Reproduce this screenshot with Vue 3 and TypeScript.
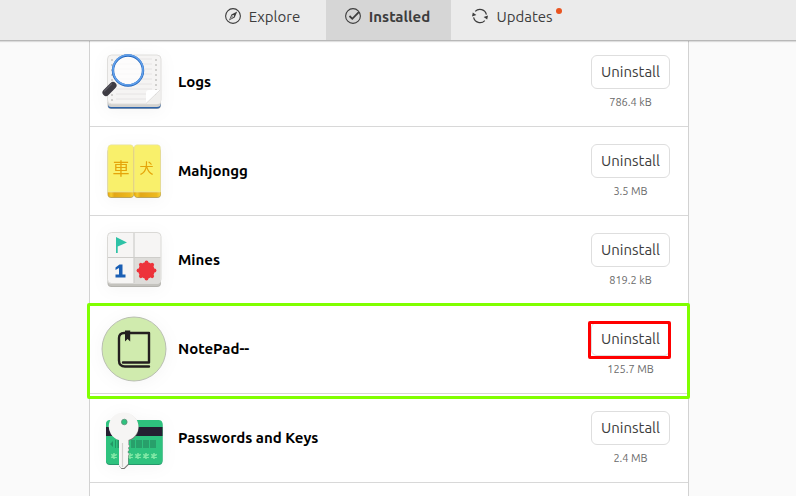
<script setup lang="ts">
import { ref } from 'vue'

type IconName = 'logs' | 'mahjongg' | 'mines' | 'notepad' | 'keys'

interface InstalledApp {
  name: string
  size: string
  icon: IconName
  highlighted?: boolean
}

const tabs = ['Explore', 'Installed', 'Updates'] as const
const activeTab = ref<(typeof tabs)[number]>('Installed')

const apps: InstalledApp[] = [
  { name: 'Logs', size: '786.4 kB', icon: 'logs' },
  { name: 'Mahjongg', size: '3.5 MB', icon: 'mahjongg' },
  { name: 'Mines', size: '819.2 kB', icon: 'mines' },
  { name: 'NotePad--', size: '125.7 MB', icon: 'notepad', highlighted: true },
  { name: 'Passwords and Keys', size: '2.4 MB', icon: 'keys' },
]

const bars = [30, 32, 35, 37, 39, 42, 44, 46, 49, 51, 53]
const stars = [12, 28, 36, 44, 52]
const ruled = [9, 14, 19, 24, 29, 34, 39, 44, 49]
const spikes = [0, 45, 90, 135, 180, 225, 270, 315]
</script>

<template>
  <div class="window">
    <header class="header">
      <nav class="tabs">
        <button
          v-for="tab in tabs"
          :key="tab"
          type="button"
          class="tab"
          :class="{ active: tab === activeTab }"
          @click="activeTab = tab"
        >
          <svg class="tab-icon" viewBox="0 0 16 16" aria-hidden="true">
            <template v-if="tab === 'Explore'">
              <circle cx="8" cy="8" r="7.4" fill="none" stroke="#3d3d3d" stroke-width="1.1" />
              <path fill="#3d3d3d" fill-rule="evenodd" d="M12.2 3.6 9.7 9.6 3.9 12.4 6.4 6.5ZM8.1 7A1 1 0 1 0 8.1 9 1 1 0 1 0 8.1 7Z" />
              <path d="M4.4 11.9 7 7.2 8.6 8.9Z" fill="#a5a5a5" />
            </template>
            <template v-else-if="tab === 'Installed'">
              <circle cx="8" cy="8" r="7.4" fill="none" stroke="#3d3d3d" stroke-width="1.1" />
              <path d="M4.5 8 7.3 10.8 13.8 4.2" fill="none" stroke="#3d3d3d" stroke-width="1.8" />
            </template>
            <template v-else>
              <path d="M3.2 3.4A6.6 6.6 0 0 1 14.4 6.6M12.8 12.6A6.6 6.6 0 0 1 1.6 9.4" fill="none" stroke="#3d3d3d" stroke-width="1.2" />
              <path d="M0 8.6 .8 4.4 4.4 7ZM16 7.4 15.2 11.6 11.6 9Z" fill="#3d3d3d" />
            </template>
          </svg>
          <span>{{ tab }}</span>
          <i v-if="tab === 'Updates'" class="dot"></i>
        </button>
      </nav>
    </header>

    <main class="content">
      <ul class="list">
        <li v-for="app in apps" :key="app.name" class="row" :class="{ highlighted: app.highlighted }">
          <svg class="app-icon" viewBox="0 0 64 64" aria-hidden="true">
            <template v-if="app.icon === 'logs'">
              <rect x="5.5" y="8" width="53.5" height="51" rx="4" fill="#bdbdbb" />
              <path d="M6 54H58.500V55.500Q58.500 58.500 55 58.500H9Q6 58.500 6 55.500Z" fill="#2c62a8" />
              <path d="M6 50H58.500V54Q58.500 57 55 57H9Q6 57 6 54Z" fill="#d3d2cf" />
              <rect x="5.500" y="5" width="53.500" height="49" rx="4" fill="#f5f4f3" stroke="#dfdedc" />
              <path v-for="y in ruled" :key="y" :d="`M14 ${y}H50`" stroke="#e2e1df" stroke-width=".8" />
              <path v-for="y in ruled" :key="'h' + y" :d="`M9 ${y + 1}h2M53 ${y + 1}h2`" stroke="#d0cfcd" stroke-width="2" />
              <path d="M58.500 40V51Q58.500 54 55 54H44Z" fill="#f0efed" />
              <path d="M44 53.500V43Q44 40 47 40H58Z" fill="#fff" />
              <path d="M44 53.500 58 40" stroke="#d4d3d1" stroke-width=".7" />
              <circle cx="26" cy="20.500" r="15" fill="#fff" fill-opacity=".75" />
              <path d="M4 42.500 11 35.500" stroke="#3d3b43" stroke-width="7" stroke-linecap="round" />
              <path d="M2.500 41 9.500 34" stroke="#5a5861" stroke-width="1.200" stroke-linecap="round" />
              <circle cx="26" cy="20.500" r="15" fill="none" stroke="#1f64bd" stroke-width="2.400" />
              <circle cx="26" cy="20" r="15" fill="none" stroke="#62a0ea" stroke-width="1.600" />
            </template>

            <template v-else-if="app.icon === 'mahjongg'">
              <defs>
                <linearGradient id="tile-front">
                  <stop offset="0" stop-color="#e5a50a" />
                  <stop offset=".12" stop-color="#f4c92b" />
                  <stop offset=".25" stop-color="#e3a716" />
                  <stop offset=".85" stop-color="#edb91e" />
                  <stop offset="1" stop-color="#f7d33a" />
                </linearGradient>
              </defs>
              <rect x="5.500" y="9" width="26.500" height="50" rx="4" fill="#bba55b" />
              <rect x="32" y="9" width="27" height="50" rx="4" fill="#bba55b" />
              <rect x="6" y="9" width="25.500" height="49" rx="3.500" fill="url(#tile-front)" />
              <rect x="32" y="9" width="26.500" height="49" rx="3.500" fill="url(#tile-front)" />
              <path d="M9 5.800H28.500Q31.500 6 31.500 9V53H5.800V9Q6 6 9 5.800Z" fill="#f9f06b" stroke="#e2dfbd" stroke-width=".6" />
              <path d="M35 5.800H55.500Q58.500 6 58.500 9V53H32V9Q32 6 35 5.800Z" fill="#f9f06b" stroke="#e2dfbd" stroke-width=".6" />
              <path d="M31.700 8V53" stroke="#e5cf73" stroke-width=".8" />
              <text class="tile-glyph" x="19" y="36" font-size="17">車</text>
              <text class="tile-glyph" x="44.500" y="34" font-size="14">犬</text>
            </template>

            <template v-else-if="app.icon === 'mines'">
              <rect x="5.500" y="8" width="53.500" height="51" rx="4" fill="#b4b3ae" />
              <rect x="6" y="8" width="52.500" height="50" rx="4" fill="#c4c3be" />
              <rect x="5.500" y="4.500" width="53.500" height="51" rx="4" fill="#f6f5f4" stroke="#dad9d6" />
              <path d="M32 30H58.500V52Q58.500 55.500 55 55.500H32Z" fill="#deddda" />
              <path d="M32 5V55M6 29.500H58.500" stroke="#cecdca" stroke-width="1.200" />
              <path d="M14 9 25 14.500 15.700 18.500V25H14Z" fill="#2ec2a6" />
              <path d="M13.500 39.500 17.500 36.500H20.500V46.500H23.500V49.500H13.500V46.500H17V40L13.500 42Z" fill="#1a5fb4" />
              <circle cx="44.500" cy="42.500" r="8.200" fill="#ed333b" />
              <circle
                v-for="angle in spikes"
                :key="angle"
                cx="44.500"
                cy="34.500"
                r="1.900"
                fill="#ed333b"
                :transform="`rotate(${angle} 44.500 42.500)`"
              />
            </template>

            <template v-else-if="app.icon === 'notepad'">
              <circle cx="32" cy="32" r="32" fill="#d0ebae" stroke="#b3b8ad" stroke-width=".9" />
              <path d="M47 49.500H23Q17 49.500 17 43.500V21Q17 16 22 16H47V45.500H21" fill="none" stroke="#231f20" stroke-width="2.400" stroke-linecap="round" stroke-linejoin="round" />
              <path d="M23 13.500H28.200V24.500L25.600 22 23 24.500Z" fill="#231f20" />
            </template>

            <template v-else>
              <rect x="4" y="15" width="56.500" height="44" rx="4" fill="#26976b" />
              <rect x="4" y="14" width="56.500" height="44" rx="4" fill="#2ec27e" />
              <path d="M4 21H60.500V30H4Z" fill="#241f31" />
              <path d="M8 38 11 35V41ZM13 34H14V42H13ZM15.500 34H17V42H15.500Z" fill="#239765" />
              <path v-for="x in bars" :key="x" :d="`M${x} 34V42`" stroke="#25895e" stroke-width="1.200" />
              <path
                v-for="x in stars"
                :key="'s' + x"
                :d="`M${x} 47V53M${x - 2.8} 48.400 ${x + 2.8} 51.600M${x - 2.8} 51.600 ${x + 2.8} 48.400`"
                stroke="#82e8a6"
                stroke-width="1.500"
              />
              <path fill="#777673" d="M22.500 7.500A14 14 0 0 1 27 34.800V39L28 40 26.500 42 27.500 44 26 46 27.500 48 26.500 50V59L22.500 63H19.500L17 60V34.500A14 14 0 0 1 22.500 7.500Z" />
              <path fill="#f6f5f4" d="M22.300 6.600A14 14 0 0 1 26.500 34V39L27.500 40 26 42 27 44 25.500 46 27 48 26 50V58L22 62H19L17 59.500V34A14 14 0 0 1 22.300 6.600Z" />
              <path d="M20.500 37V61" stroke="#d2d1ce" stroke-width="1.200" />
              <circle cx="22.300" cy="16" r="2.800" fill="#2ec27e" stroke="#5c8f77" stroke-width=".8" />
            </template>
          </svg>
          <h2 class="name">{{ app.name }}</h2>
          <div class="actions">
            <button type="button" class="uninstall" :aria-label="`Uninstall ${app.name}`">Uninstall</button>
            <span class="size">{{ app.size }}</span>
          </div>
        </li>
        <li class="row"></li>
      </ul>
    </main>
  </div>
</template>

<style>
body {
  margin: 0;
}
</style>

<style scoped>
.window {
  display: flex;
  flex-direction: column;
  height: 100vh;
  overflow: hidden;
  background: #fafafa;
  color: #3d3d3d;
  font-family: Ubuntu, 'Noto Sans', sans-serif;
  font-size: 15px;
}

.header {
  position: relative;
  z-index: 1;
  display: flex;
  flex: none;
  justify-content: center;
  height: 40px;
  padding-right: 19px;
  border-bottom: 1px solid #b8b8b8;
  background: #ebebeb;
  box-shadow: 0 1px 1px rgba(0, 0, 0, 0.12);
}

.tabs {
  display: grid;
  grid-template-columns: repeat(3, 125px);
}

.tab {
  display: flex;
  align-items: center;
  justify-content: center;
  gap: 8px;
  padding: 0 2px 8px 0;
  border: 0;
  background: transparent;
  color: inherit;
  font: inherit;
  line-height: 20px;
}

.tab.active {
  background: #d6d6d6;
  font-weight: 700;
}

.tab span {
  padding-top: 2px;
}

.tab-icon {
  flex: none;
  width: 16px;
  height: 16px;
}

.dot {
  width: 6px;
  height: 6px;
  margin: -10px -9px 0 -5px;
  border-radius: 50%;
  background: #e95420;
}

.content {
  display: flex;
  flex: 1;
  justify-content: center;
  min-height: 0;
  padding: 0 107px 0 89px;
}

.list {
  width: 100%;
  max-width: 598px;
  height: max-content;
  margin: -3px 0 0;
  padding: 0;
  border: 1px solid #d2d2d2;
  border-width: 0 1px;
  background: #fff;
  list-style: none;
}

.row {
  position: relative;
  display: flex;
  align-items: center;
  gap: 12px;
  height: 88px;
  padding: 0 18px 0 12px;
  border-bottom: 1px solid #d8d8d8;
}

.app-icon {
  flex: none;
  width: 64px;
  height: 64px;
  overflow: visible;
  filter: drop-shadow(0 2px 8px rgba(0, 0, 0, 0.04));
}

.tile-glyph {
  fill: #e5a50a;
  font-family: 'Noto Sans CJK TC', sans-serif;
  text-anchor: middle;
}

.name {
  flex: 1;
  margin: 0;
  color: #000;
  font-size: 15px;
  font-weight: 700;
  line-height: 20px;
}

.actions {
  display: flex;
  flex-direction: column;
  align-items: center;
  gap: 5px;
  width: 79px;
  padding-top: 1px;
}

.uninstall {
  width: 100%;
  height: 34px;
  padding: 0 0 2px;
  border: 1px solid #dedede;
  border-radius: 6px;
  background: #fff;
  color: #3d3d3d;
  font: inherit;
}

.size {
  color: #6a6a6a;
  font-size: 11px;
  line-height: 16px;
}

.highlighted::after {
  position: absolute;
  z-index: 1;
  inset: -2px -2px -6px -3px;
  border: 3px solid #80ff00;
  border-radius: 2px;
  content: '';
  pointer-events: none;
}

.highlighted .actions {
  position: relative;
}

.highlighted .actions::after {
  position: absolute;
  inset: 0 -1px 18px -3px;
  border: 3px solid #f00;
  border-radius: 2px;
  content: '';
  pointer-events: none;
}
</style>
